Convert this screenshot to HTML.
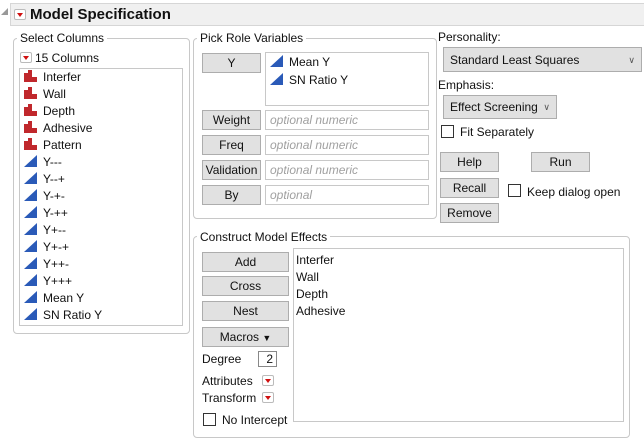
<!DOCTYPE html>
<html><head><style>
*{box-sizing:border-box}
body{margin:0;width:644px;height:442px;background:#fff;font-family:"Liberation Sans",sans-serif;font-size:12px;color:#111;position:relative;overflow:hidden}
.a{position:absolute;white-space:nowrap}
.grp{position:absolute;border:1px solid #c8c8c8;border-radius:4px}
.lbl{position:absolute;background:#fff;padding:0 3px;font-size:12px;line-height:14px}
.btn{position:absolute;background:#e1e1e1;border:1px solid #adadad;text-align:center;font-size:12px;line-height:19px}
.box{position:absolute;border:1px solid #c8c8c8;background:#fff}
.tf{position:absolute;border:1px solid #c8c8c8;background:#fff;color:#a0a0a0;font-style:italic;padding-left:4px;line-height:18px}
.red{position:absolute;width:12px;height:11px;border:1px solid #bbb;background:#fff;border-radius:2px}
.red:after{content:"";position:absolute;left:2px;top:3px;border-left:3.5px solid transparent;border-right:3.5px solid transparent;border-top:4px solid #d01010}
.cb{position:absolute;width:13px;height:13px;border:1px solid #333;background:#fff}
.item{position:absolute;line-height:17px;height:17px}
.nom{display:inline-block;width:14px;height:12px;vertical-align:-1px;margin-right:5px}
.ct{display:inline-block;width:0;height:0;border-left:13px solid transparent;border-bottom:12px solid #2a5ab8;vertical-align:-1px;margin-right:6px}
</style></head><body>
<div class="a" style="left:1px;top:8px;width:0;height:0;border-left:7px solid transparent;border-bottom:7px solid #999"></div>
<div style="position:absolute;left:10px;top:3px;width:640px;height:23px;background:#f0f0f0;border:1px solid #d6d6d6"></div>
<div class="red" style="left:14px;top:9px"></div>
<div class="a" style="left:30px;top:5px;font-size:15px;font-weight:bold;line-height:20px">Model Specification</div>

<div class="grp" style="left:13px;top:38px;width:177px;height:296px"></div>
<div class="lbl" style="left:17px;top:31px">Select Columns</div>
<div class="red" style="left:20px;top:52px"></div>
<div class="a" style="left:35px;top:51px;line-height:14px">15 Columns</div>
<div class="box" style="left:19px;top:68px;width:164px;height:258px"></div>
<div id="cols"></div>

<div class="grp" style="left:193px;top:38px;width:244px;height:181px"></div>
<div class="lbl" style="left:197px;top:31px">Pick Role Variables</div>
<div class="btn" style="left:202px;top:53px;width:59px;height:20px">Y</div>
<div class="box" style="left:265px;top:52px;width:164px;height:54px"></div>
<div class="item" style="left:270px;top:54px"><span class="ct"></span>Mean Y</div>
<div class="item" style="left:270px;top:72px"><span class="ct"></span>SN Ratio Y</div>
<div class="btn" style="left:202px;top:110px;width:59px;height:20px">Weight</div>
<div class="tf" style="left:265px;top:110px;width:164px;height:20px">optional numeric</div>
<div class="btn" style="left:202px;top:135px;width:59px;height:20px">Freq</div>
<div class="tf" style="left:265px;top:135px;width:164px;height:20px">optional numeric</div>
<div class="btn" style="left:202px;top:160px;width:59px;height:20px">Validation</div>
<div class="tf" style="left:265px;top:160px;width:164px;height:20px">optional numeric</div>
<div class="btn" style="left:202px;top:185px;width:59px;height:20px">By</div>
<div class="tf" style="left:265px;top:185px;width:164px;height:20px">optional</div>

<div class="a" style="left:438px;top:30px;line-height:14px">Personality:</div>
<div class="btn" style="left:443px;top:47px;width:199px;height:25px;text-align:left;padding-left:6px;line-height:24px">Standard Least Squares<span style="position:absolute;right:6px;font-size:9px;color:#555">&#8744;</span></div>
<div class="a" style="left:438px;top:78px;line-height:14px">Emphasis:</div>
<div class="btn" style="left:443px;top:95px;width:114px;height:24px;text-align:left;padding-left:6px;line-height:23px">Effect Screening<span style="position:absolute;right:6px;font-size:9px;color:#555">&#8744;</span></div>
<div class="cb" style="left:441px;top:125px"></div>
<div class="a" style="left:460px;top:125px;line-height:14px">Fit Separately</div>
<div class="btn" style="left:440px;top:152px;width:59px;height:20px">Help</div>
<div class="btn" style="left:531px;top:152px;width:59px;height:20px">Run</div>
<div class="btn" style="left:440px;top:178px;width:59px;height:20px">Recall</div>
<div class="cb" style="left:508px;top:184px"></div>
<div class="a" style="left:527px;top:185px;line-height:14px">Keep dialog open</div>
<div class="btn" style="left:440px;top:203px;width:59px;height:20px">Remove</div>

<div class="grp" style="left:193px;top:236px;width:437px;height:202px"></div>
<div class="lbl" style="left:197px;top:230px">Construct Model Effects</div>
<div class="btn" style="left:202px;top:252px;width:87px;height:20px">Add</div>
<div class="btn" style="left:202px;top:276px;width:87px;height:20px">Cross</div>
<div class="btn" style="left:202px;top:301px;width:87px;height:20px">Nest</div>
<div class="btn" style="left:202px;top:327px;width:87px;height:20px">Macros <span style="font-size:9px">&#9660;</span></div>
<div class="box" style="left:293px;top:248px;width:331px;height:174px"></div>
<div class="item" style="left:296px;top:252px">Interfer</div>
<div class="item" style="left:296px;top:269px">Wall</div>
<div class="item" style="left:296px;top:286px">Depth</div>
<div class="item" style="left:296px;top:303px">Adhesive</div>
<div class="a" style="left:202px;top:352px;line-height:14px">Degree</div>
<div class="box" style="left:258px;top:351px;width:19px;height:16px;border-color:#888;text-align:right;padding-right:3px;line-height:14px">2</div>
<div class="a" style="left:202px;top:374px;line-height:14px">Attributes</div>
<div class="red" style="left:262px;top:375px"></div>
<div class="a" style="left:202px;top:391px;line-height:14px">Transform</div>
<div class="red" style="left:262px;top:392px"></div>
<div class="cb" style="left:203px;top:413px"></div>
<div class="a" style="left:222px;top:413px;line-height:14px">No Intercept</div>

<script>
var n=[["Interfer",1],["Wall",1],["Depth",1],["Adhesive",1],["Pattern",1],["Y---"],["Y--+"],["Y-+-"],["Y-++"],["Y+--"],["Y+-+"],["Y++-"],["Y+++"],["Mean Y"],["SN Ratio Y"]];
var h="";
n.forEach(function(v,i){
var ic=v[1]?'<svg class="nom" viewBox="0 0 14 12"><rect x="0" y="3" width="4" height="9" fill="#c0282c"/><rect x="4" y="0" width="4" height="12" fill="#c0282c"/><rect x="8" y="7" width="5" height="5" fill="#c0282c"/></svg>':'<span class="ct"></span>';
h+='<div class="item" style="left:24px;top:'+(68.5+i*17.07)+'px">'+ic+v[0]+'</div>';});
document.getElementById("cols").innerHTML=h;
</script>
</body></html>
